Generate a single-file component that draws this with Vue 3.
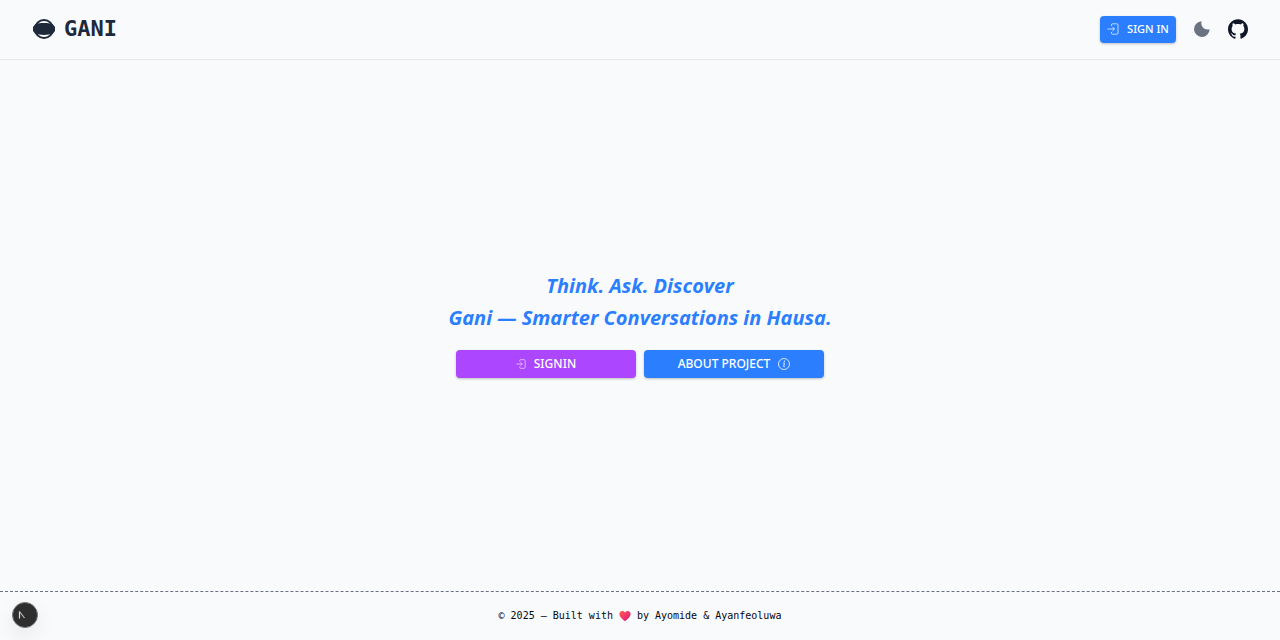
<script setup>
const year = 2025
</script>

<template>
  <div class="page">
    <header class="bar">
      <a class="brand" href="#">
        <svg width="24" height="22" viewBox="0 0 24 22" aria-hidden="true">
          <circle cx="12" cy="11" r="9" fill="none" stroke="#1e293b" stroke-width="2" />
          <path d="M3 6.5C8 4.6 16 4.6 21 6.5L23 9v4l-2 2.5c-5 1.9-13 1.9-18 0L1 13V9z" fill="#1e293b" />
        </svg>
        <span>GANI</span>
      </a>
      <nav class="actions">
        <button class="btn small blue" type="button">
          <svg class="enter" width="12" height="12" viewBox="0 0 12 12" aria-hidden="true">
            <path d="M4.5 3V1.8Q4.5 .8 5.5 .8H9.7Q11 .8 11 2V10Q11 11.2 9.7 11.2H5.5Q4.5 11.2 4.5 10.2V9M.5 6H7.5M5.4 3.9L7.5 6L5.4 8.1" />
          </svg>
          <span>SIGN IN</span>
        </button>
        <button class="icon" type="button" aria-label="Toggle theme">
          <svg width="20" height="20" viewBox="0 0 20 20" fill="#6b7280" aria-hidden="true">
            <path d="M9.6 2.3C8.3 6.8 11.8 11.8 17.6 10.3A7.8 7.8 0 1 1 9.6 2.3z" />
          </svg>
        </button>
        <a class="icon" href="#" aria-label="GitHub">
          <svg width="20" height="20" viewBox="0 0 24 24" fill="#101828" aria-hidden="true">
            <path d="M12 .297c-6.63 0-12 5.373-12 12 0 5.303 3.438 9.8 8.205 11.385.6.113.82-.258.82-.577 0-.285-.01-1.04-.015-2.04-3.338.724-4.042-1.61-4.042-1.61C4.422 18.07 3.633 17.7 3.633 17.7c-1.087-.744.084-.729.084-.729 1.205.084 1.838 1.236 1.838 1.236 1.07 1.835 2.809 1.305 3.495.998.108-.776.417-1.305.76-1.605-2.665-.3-5.466-1.332-5.466-5.93 0-1.31.465-2.38 1.235-3.22-.135-.303-.54-1.523.105-3.176 0 0 1.005-.322 3.3 1.23.96-.267 1.98-.399 3-.405 1.02.006 2.04.138 3 .405 2.28-1.552 3.285-1.23 3.285-1.23.645 1.653.24 2.873.12 3.176.765.84 1.23 1.91 1.23 3.22 0 4.61-2.805 5.625-5.475 5.92.42.36.81 1.096.81 2.22 0 1.606-.015 2.896-.015 3.286 0 .315.21.69.825.57C20.565 22.092 24 17.592 24 12.297c0-6.627-5.373-12-12-12" />
          </svg>
        </a>
      </nav>
    </header>

    <main class="hero">
      <h1>Think. Ask. Discover<br />Gani — Smarter Conversations in Hausa.</h1>
      <div class="choices">
        <button class="btn purple" type="button">
          <svg class="enter" width="10" height="10" viewBox="0 0 12 12" aria-hidden="true">
            <path d="M4.5 3V1.8Q4.5 .8 5.5 .8H9.7Q11 .8 11 2V10Q11 11.2 9.7 11.2H5.5Q4.5 11.2 4.5 10.2V9M.5 6H7.5M5.4 3.9L7.5 6L5.4 8.1" />
          </svg>
          <span>SIGNIN</span>
        </button>
        <button class="btn blue" type="button">
          <span>ABOUT PROJECT</span>
          <svg width="12" height="12" viewBox="0 0 12 12" fill="none" stroke="#fff" aria-hidden="true">
            <circle cx="6" cy="6" r="5.5" stroke-width=".8" />
            <path d="M5.3 5H6.4L5.7 8.4Q5.6 9.1 6.7 8.7" stroke-width=".9" />
            <circle cx="6.4" cy="3.2" r=".6" fill="#fff" stroke="none" />
          </svg>
        </button>
      </div>
    </main>

    <footer class="foot">
      <span>© {{ year }} — Built with</span>
      <svg width="12" height="12" viewBox="0 0 12 12" role="img" aria-label="love">
        <defs>
          <linearGradient id="heart" x1="0" y1="0" x2="1" y2="1">
            <stop offset="0" stop-color="#ff6050" />
            <stop offset=".5" stop-color="#f0386a" />
            <stop offset="1" stop-color="#d81b78" />
          </linearGradient>
        </defs>
        <path d="M6 11.2C3.5 9.6.4 6.7.4 4.1.4 2.2 1.7 1 3.3 1 4.5 1 5.5 1.6 6 2.6 6.5 1.6 7.5 1 8.7 1c1.6 0 2.9 1.2 2.9 3.1 0 2.6-3.1 5.5-5.6 7.1z" fill="url(#heart)" />
      </svg>
      <span>by Ayomide &amp; Ayanfeoluwa</span>
    </footer>

    <button class="dev" type="button" aria-label="Open developer tools">
      <svg width="12" height="12" viewBox="0 0 12 12" fill="none" aria-hidden="true">
        <path d="M2.5 9.5V2.5" stroke="#ddd" stroke-width="1.2" />
        <path d="M2.5 2.5L7.5 9" stroke="#bbb" stroke-width="1.2" />
      </svg>
    </button>
  </div>
</template>

<style>
body {
  background: #f9fafb;
}
</style>

<style scoped>
.page {
  min-height: 100vh;
  display: flex;
  flex-direction: column;
  background: #f9fafc;
  font-family: "Open Sans", "Noto Sans", sans-serif;
}
.bar {
  display: flex;
  align-items: center;
  justify-content: space-between;
  padding: 15px 32px 16px;
  border-bottom: 1px solid #e5e7eb;
}
.brand {
  display: flex;
  align-items: center;
  gap: 8px;
  color: #1e293b;
  text-decoration: none;
  font: bold 22px/28px "DejaVu Sans Mono", monospace;
}
.actions {
  display: flex;
  align-items: center;
  gap: 16px;
}
.icon {
  display: flex;
  padding: 0;
  border: 0;
  background: none;
  cursor: pointer;
}
.btn {
  display: flex;
  align-items: center;
  justify-content: center;
  gap: 8px;
  width: 180px;
  height: 28px;
  padding: 0;
  border: 0;
  border-radius: 4px;
  color: #fff;
  font: 500 12px/16px "Noto Sans", "Open Sans", sans-serif;
  box-shadow: 0 1px 3px rgba(0, 0, 0, 0.15), 0 1px 2px rgba(0, 0, 0, 0.1);
  cursor: pointer;
}
.small {
  width: 76px;
  height: 27px;
  font-size: 11px;
}
.blue {
  background: #2b7fff;
}
.purple {
  background: #ad46ff;
}
.enter {
  fill: none;
  stroke: #fff;
  stroke-width: 0.7;
}
.hero {
  flex: 1;
  display: flex;
  flex-direction: column;
  align-items: center;
  justify-content: center;
  gap: 16px;
  padding-bottom: 4px;
}
h1 {
  margin: 0;
  color: #2b7fff;
  text-align: center;
  font-size: 20px;
  font-weight: 700;
  font-style: italic;
  line-height: 32px;
}
.choices {
  display: flex;
  flex-wrap: wrap;
  justify-content: center;
  gap: 8px;
}
.foot {
  display: flex;
  align-items: center;
  justify-content: center;
  gap: 6px;
  padding: 16px;
  border-top: 1px dashed #6a7282;
  color: #030712;
  font: 10px/16px "DejaVu Sans Mono", monospace;
}
.dev {
  position: fixed;
  left: 12px;
  bottom: 12px;
  display: flex;
  align-items: center;
  justify-content: center;
  width: 26px;
  height: 26px;
  padding: 0 4px 0 0;
  border: 1px solid #777;
  border-radius: 50%;
  background: #2e2e2e;
  box-shadow: 0 8px 20px rgba(0, 0, 0, 0.08);
}
</style>
